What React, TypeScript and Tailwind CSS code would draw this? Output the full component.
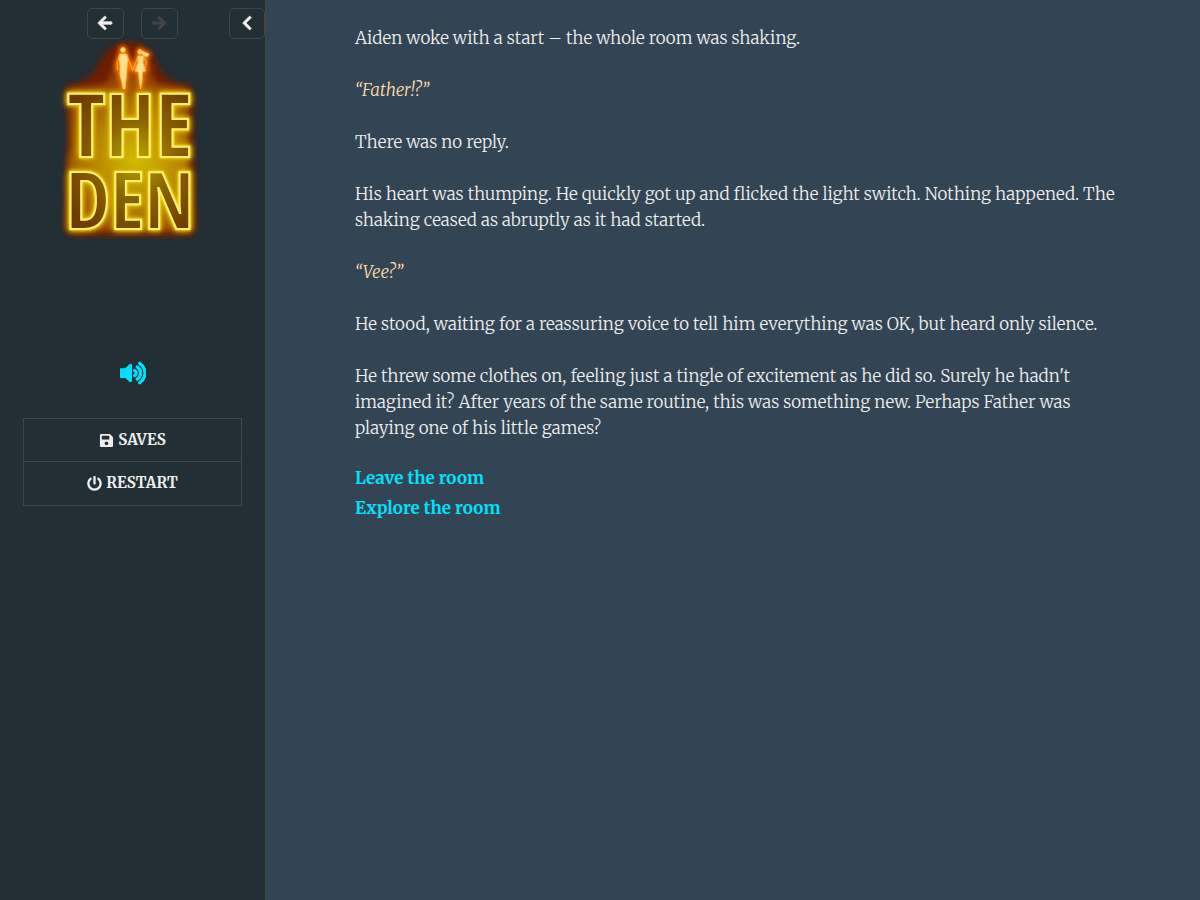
import { useState, type ReactNode } from "react";
import { FaArrowLeft, FaArrowRight, FaChevronLeft, FaPowerOff, FaSave, FaVolumeUp } from "react-icons/fa";

/* ─── Neon sign ─── */
function Couple() {
  return (
    <g strokeLinecap="round" strokeLinejoin="round">
      {/* him */}
      <circle cx="60" cy="11" r="2.4" />
      <path d="M57 15 L63.5 15 L65 20 L64 29 L63.5 37 L62.5 44 L62 50 L60 50 L59 44 L57 36 L57 26 L56 20 Z" />
      <path d="M56.5 16 L54 24 L54.5 31 M64 16 L67 25 L69.5 31" fill="none" />
      {/* her */}
      <circle cx="77" cy="13" r="2.2" />
      <path d="M77 10.5 L81 13 L86 15 L84 18 L80 16 Z" />
      <path d="M75 17 L80.5 17 L80 24 L82.5 32 L79.5 33 L79 43 L77.5 50 L76.5 43 L75.5 33 L72 32 L75 24 Z" />
      <path d="M74.5 18 L72 26 L69.5 31 M81 18 L83.5 23 L82 29" fill="none" />
    </g>
  );
}

function Logo() {
  return (
    <svg viewBox="0 0 140 214" className="h-[214px] w-[140px] overflow-visible" role="img" aria-label="The Den">
      <defs>
        <filter id="halo" x="-30%" y="-30%" width="160%" height="160%">
          <feGaussianBlur stdDeviation="3" />
        </filter>
        <filter id="figure" x="-60%" y="-30%" width="220%" height="160%">
          <feGaussianBlur stdDeviation="2" />
        </filter>
        <radialGradient id="heat" gradientUnits="userSpaceOnUse" cx="74" cy="120" r="85">
          <stop offset="0" stopColor="#d2c400" />
          <stop offset="0.5" stopColor="#b88600" />
          <stop offset="1" stopColor="#943f00" />
        </radialGradient>
        <radialGradient id="letter" gradientUnits="userSpaceOnUse" cx="74" cy="120" r="85">
          <stop offset="0" stopColor="#b8a800" />
          <stop offset="0.45" stopColor="#8c6400" />
          <stop offset="1" stopColor="#6e3a00" />
        </radialGradient>
      </defs>

      <path
        d="M4 46 Q24 44 34 28 Q44 3 66 3 Q88 3 96 28 Q104 44 126 46 Q132 50 130 80 L133 190 Q132 197 124 197 L12 197 Q2 196 2 188 L4 120 L6 90 Q1 50 4 46 Z"
        fill="#6e1d00"
        filter="url(#halo)"
      />
      <path
        d="M6 50 L44 44 L52 24 L86 24 L92 44 L124 50 L126 118 L129 192 L4 192 L5 120 L8 108 Z"
        fill="url(#heat)"
        filter="url(#halo)"
      />

      <g
        className="font-['Open_Sans_Condensed','Roboto_Condensed',sans-serif] font-bold [filter:drop-shadow(0_0_1px_#f2dc00)_drop-shadow(0_0_2px_#e6c800)_drop-shadow(0_0_3px_#c89600)]"
        textAnchor="middle"
        fill="url(#letter)"
        stroke="#fff07a"
        strokeWidth="2"
      >
        <text x="67" y="118" className="text-[88px]">THE</text>
        <text x="67" y="190" className="text-[80px]">DEN</text>
      </g>

      <g fill="#ff8a00" stroke="#ff7a00" strokeWidth="4" filter="url(#figure)">
        <Couple />
      </g>
      <g fill="#ffe08a" stroke="#ffb640" strokeWidth="0.8">
        <Couple />
      </g>
    </svg>
  );
}

/* ─── Sidebar ─── */
const navButton =
  "flex h-[31px] w-[37px] items-center justify-center rounded-[5px] border border-[#444] pr-0.5 pb-0.5 text-[16px] disabled:text-[#444]";

function MenuButton({ icon, children }: { icon: ReactNode; children: ReactNode }) {
  return (
    <button
      type="button"
      className="flex h-[43px] w-full items-center justify-center gap-1 text-[15px] font-bold uppercase hover:bg-white/5"
    >
      {icon}
      {children}
    </button>
  );
}

function Sidebar() {
  const [muted, setMuted] = useState(false);

  return (
    <aside className="flex w-[266px] shrink-0 flex-col items-center border-r border-[#444] bg-[#222f35] pt-2">
      <div className="grid w-full grid-cols-[1fr_auto_1fr] items-center">
        <span />
        <div className="flex gap-[17px]">
          <button type="button" aria-label="Go back" className={navButton}>
            <FaArrowLeft stroke="currentColor" strokeWidth="24" />
          </button>
          <button type="button" aria-label="Go forward" disabled className={navButton}>
            <FaArrowRight stroke="currentColor" strokeWidth="24" />
          </button>
        </div>
        <button
          type="button"
          aria-label="Toggle sidebar"
          className="flex h-[31px] w-9 items-center justify-center justify-self-end rounded-[5px] border border-[#444] pb-0.5 text-[16px]"
        >
          <FaChevronLeft stroke="currentColor" strokeWidth="24" />
        </button>
      </div>

      <Logo />

      <button
        type="button"
        aria-label="Toggle sound"
        aria-pressed={muted}
        onClick={() => setMuted(!muted)}
        className={`mt-[107px] text-[26px] ${muted ? "text-[#444]" : "text-[#00e1ff]"}`}
      >
        <FaVolumeUp stroke="currentColor" strokeWidth="24" />
      </button>

      <div className="w-full px-[23px] pt-8">
        <div className="divide-y divide-[#444] border border-[#444]">
          <MenuButton icon={<FaSave />}>Saves</MenuButton>
          <MenuButton icon={<FaPowerOff />}>Restart</MenuButton>
        </div>
      </div>
    </aside>
  );
}

/* ─── Story passage ─── */
function Speech({ children }: { children: ReactNode }) {
  return <p className="italic text-[#ffdead]">{children}</p>;
}

export default function App() {
  return (
    <div className="flex min-h-screen bg-[#334454] font-['Merriweather','Noto_Serif','Liberation_Serif',serif] text-[#eee]">
      <Sidebar />
      <main className="flex-1 pt-[25px] pr-[72px] pl-[89px] text-[17px] leading-[26px] font-light">
        <article className="flex flex-col gap-[26px]">
          <p>Aiden woke with a start – the whole room was shaking.</p>
          <Speech>“Father!?”</Speech>
          <p>There was no reply.</p>
          <p>
            His heart was thumping. He quickly got up and flicked the light switch. Nothing happened. The shaking
            ceased as abruptly as it had started.
          </p>
          <Speech>“Vee?”</Speech>
          <p>He stood, waiting for a reassuring voice to tell him everything was OK, but heard only silence.</p>
          <p>
            He threw some clothes on, feeling just a tingle of excitement as he did so. Surely he hadn't imagined it?
            After years of the same routine, this was something new. Perhaps Father was playing one of his little
            games?
          </p>
        </article>
        <nav className="mt-6 flex flex-col items-start gap-1 font-bold text-[#00e1ff]">
          <a href="#leave" className="hover:underline">Leave the room</a>
          <a href="#explore" className="hover:underline">Explore the room</a>
        </nav>
      </main>
    </div>
  );
}
